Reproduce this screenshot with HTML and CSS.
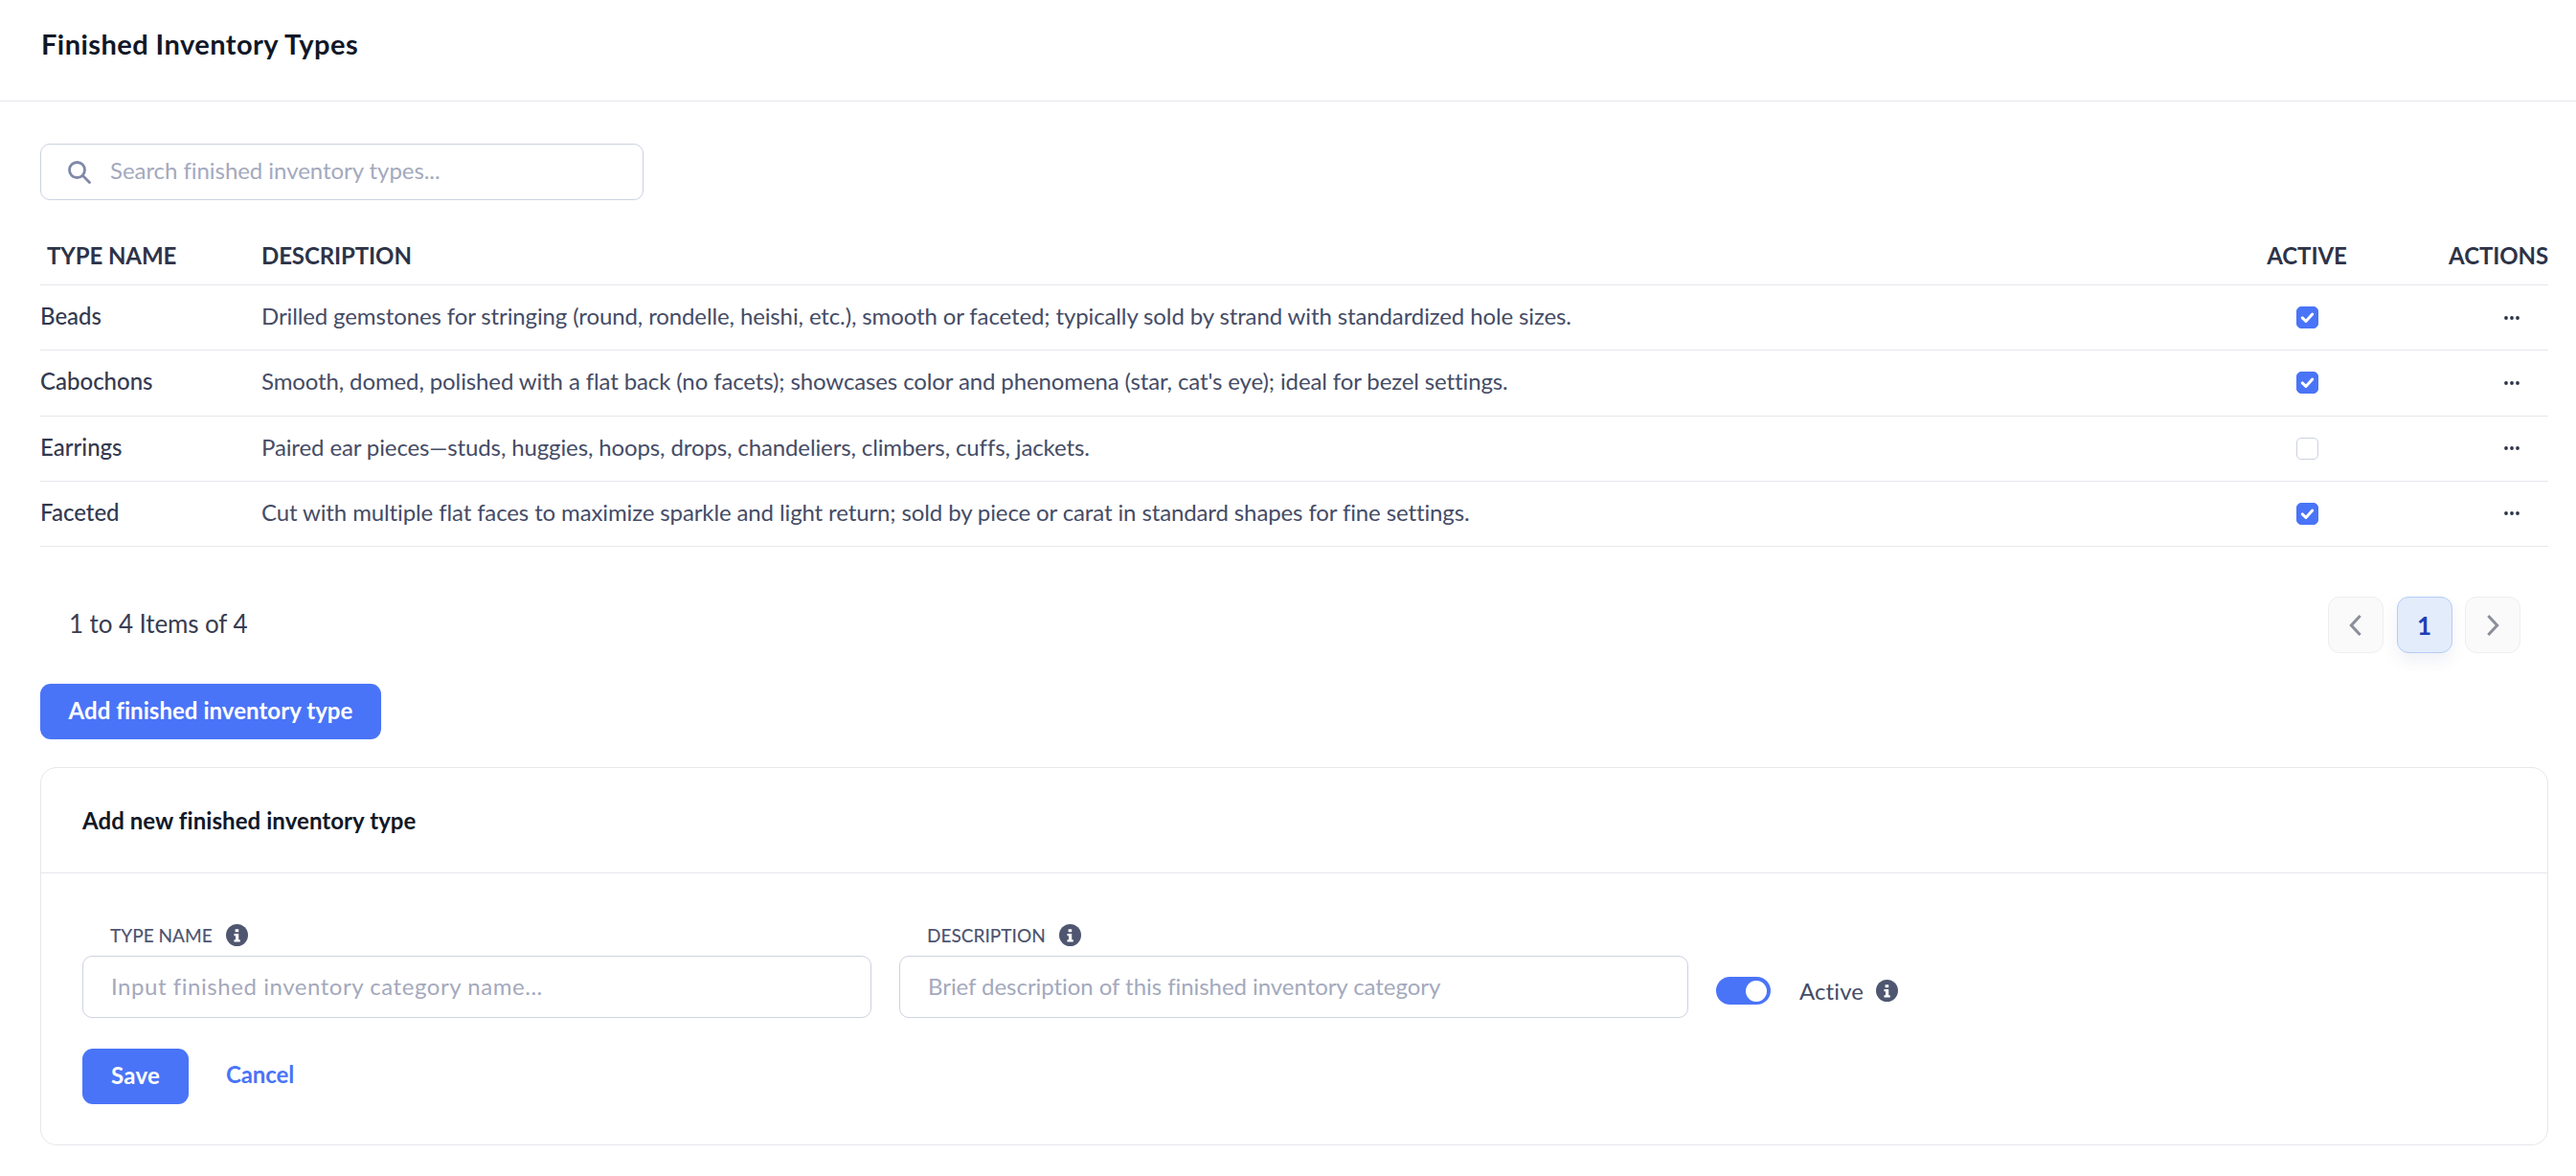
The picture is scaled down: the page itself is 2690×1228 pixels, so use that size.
FILE: index.html
```html
<!DOCTYPE html>
<html lang="en">
<head>
    <meta charset="UTF-8">
    <title>Finished Inventory Types</title>
    <link rel="stylesheet" href="styles.css">
</head>
<body>
    <header class="page-header">
        <h1 class="page-title">Finished Inventory Types</h1>
    </header>
    <main class="content">
        <label class="search">
            <svg class="search-icon" viewBox="0 0 24 24"><circle cx="9.5" cy="9.5" r="8"/><path d="M15.5 15.5l7 7"/></svg>
            <input class="search-input" type="text" placeholder="Search finished inventory types...">
        </label>

        <div class="table">
            <div class="table-row table-head">
                <div class="col-name">TYPE NAME</div>
                <div>DESCRIPTION</div>
                <div class="col-active">ACTIVE</div>
                <div class="col-actions">ACTIONS</div>
            </div>
            <div class="table-row">
                <div class="cell-name">Beads</div>
                <div class="cell-desc">Drilled gemstones for stringing (round, rondelle, heishi, etc.), smooth or faceted; typically sold by strand with standardized hole sizes.</div>
                <div class="col-active"><span class="checkbox is-checked"><svg viewBox="0 0 24 24"><path d="M6 12.5l4.2 4L18 8"/></svg></span></div>
                <div class="col-actions"><svg class="dots" viewBox="0 0 16 4"><circle cx="2" cy="2" r="1.9"/><circle cx="8" cy="2" r="1.9"/><circle cx="14" cy="2" r="1.9"/></svg></div>
            </div>
            <div class="table-row">
                <div class="cell-name">Cabochons</div>
                <div class="cell-desc">Smooth, domed, polished with a flat back (no facets); showcases color and phenomena (star, cat's eye); ideal for bezel settings.</div>
                <div class="col-active"><span class="checkbox is-checked"><svg viewBox="0 0 24 24"><path d="M6 12.5l4.2 4L18 8"/></svg></span></div>
                <div class="col-actions"><svg class="dots" viewBox="0 0 16 4"><circle cx="2" cy="2" r="1.9"/><circle cx="8" cy="2" r="1.9"/><circle cx="14" cy="2" r="1.9"/></svg></div>
            </div>
            <div class="table-row">
                <div class="cell-name">Earrings</div>
                <div class="cell-desc">Paired ear pieces—studs, huggies, hoops, drops, chandeliers, climbers, cuffs, jackets.</div>
                <div class="col-active"><span class="checkbox"></span></div>
                <div class="col-actions"><svg class="dots" viewBox="0 0 16 4"><circle cx="2" cy="2" r="1.9"/><circle cx="8" cy="2" r="1.9"/><circle cx="14" cy="2" r="1.9"/></svg></div>
            </div>
            <div class="table-row">
                <div class="cell-name">Faceted</div>
                <div class="cell-desc">Cut with multiple flat faces to maximize sparkle and light return; sold by piece or carat in standard shapes for fine settings.</div>
                <div class="col-active"><span class="checkbox is-checked"><svg viewBox="0 0 24 24"><path d="M6 12.5l4.2 4L18 8"/></svg></span></div>
                <div class="col-actions"><svg class="dots" viewBox="0 0 16 4"><circle cx="2" cy="2" r="1.9"/><circle cx="8" cy="2" r="1.9"/><circle cx="14" cy="2" r="1.9"/></svg></div>
            </div>
        </div>

        <div class="table-footer">
            <span class="items-count">1 to 4 Items of 4</span>
            <div class="pager">
                <button class="pager-btn"><svg viewBox="0 0 24 24"><path d="M16 3.5l-8 8.5 8 8.5"/></svg></button>
                <button class="pager-btn is-current">1</button>
                <button class="pager-btn"><svg viewBox="0 0 24 24"><path d="M8 3.5l8 8.5-8 8.5"/></svg></button>
            </div>
        </div>

        <button class="btn btn-add">Add finished inventory type</button>

        <section class="card">
            <h2 class="card-title">Add new finished inventory type</h2>
            <div class="card-body">
                <div class="form-row">
                    <div class="field">
                        <div class="field-label">TYPE NAME
                            <svg class="info" viewBox="0 0 24 24"><circle cx="12" cy="12" r="12"/><path d="M10 5.5h3.8v3.2H10zM8.8 10.5h5v6.5h1.6v2.4H8.8V17h1.6v-4.1H8.8z"/></svg>
                        </div>
                        <input class="text-input input-name" type="text" placeholder="Input finished inventory category name...">
                    </div>
                    <div class="field">
                        <div class="field-label">DESCRIPTION
                            <svg class="info" viewBox="0 0 24 24"><circle cx="12" cy="12" r="12"/><path d="M10 5.5h3.8v3.2H10zM8.8 10.5h5v6.5h1.6v2.4H8.8V17h1.6v-4.1H8.8z"/></svg>
                        </div>
                        <input class="text-input input-desc" type="text" placeholder="Brief description of this finished inventory category">
                    </div>
                    <div class="active-toggle">
                        <span class="toggle"><span class="toggle-knob"></span></span>
                        <span class="toggle-label">Active</span>
                        <svg class="info" viewBox="0 0 24 24"><circle cx="12" cy="12" r="12"/><path d="M10 5.5h3.8v3.2H10zM8.8 10.5h5v6.5h1.6v2.4H8.8V17h1.6v-4.1H8.8z"/></svg>
                    </div>
                </div>
                <div class="form-actions">
                    <button class="btn btn-save">Save</button>
                    <a class="link-cancel" href="#">Cancel</a>
                </div>
            </div>
        </section>
    </main>
</body>
</html>
```

FILE: styles.css
```css
* {
    margin: 0;
    padding: 0;
    box-sizing: border-box;
}
body {
    background-color: #fff;
    color: #454c66;
    font-family: "Lato", "Liberation Sans", sans-serif;
    font-size: 24px;
}
button, input {
    font-family: inherit;
}

.page-header {
    height: 106px;
    padding: 0 0 14px 43px;
    display: flex;
    align-items: center;
    border-bottom: 1px solid #e5e7eb;
}
.page-title {
    font-size: 29px;
    font-weight: 700;
    letter-spacing: 0.45px;
    color: #111827;
}

.content {
    padding: 44px 29px 0 42px;
}

.search {
    width: 630px;
    height: 59px;
    display: flex;
    align-items: center;
    border: 1px solid #cdd2e0;
    border-radius: 10px;
    padding-left: 28px;
}
.search-icon {
    width: 24px;
    height: 24px;
    flex: none;
    fill: none;
    stroke: #7f88a8;
    stroke-width: 2.8;
    stroke-linecap: round;
}
.search-input {
    flex: 1;
    margin-left: 20px;
    padding-bottom: 4px;
    border: none;
    outline: none;
    font-size: 24px;
    letter-spacing: -0.05px;
}
.search-input::placeholder, .text-input::placeholder {
    color: #a4a9bd;
    opacity: 1;
}

.table {
    margin-top: 27px;
}
.table-row {
    display: grid;
    grid-template-columns: 231px 1fr 138px 183px;
    align-items: center;
    height: 68.25px;
    border-bottom: 1px solid #e5e7eb;
}
.table-head {
    height: 62px;
    font-weight: 700;
    letter-spacing: -0.1px;
    color: #2d3348;
}
.col-name {
    padding-left: 7px;
}
.col-active {
    display: flex;
    justify-content: center;
}
.col-actions {
    display: flex;
    justify-content: flex-end;
}
.cell-name {
    padding-bottom: 4px;
    font-weight: 500;
    color: #333a50;
}
.cell-desc {
    padding-bottom: 4px;
    letter-spacing: -0.12px;
}
.table-row .dots {
    width: 16px;
    height: 4px;
    margin-right: 30px;
    fill: #2d3348;
}

.checkbox {
    width: 23px;
    height: 23px;
    display: block;
    border: 1px solid #cdd2e0;
    border-radius: 5px;
}
.checkbox.is-checked {
    background-color: #4a74f7;
    border-color: #4a74f7;
}
.checkbox svg {
    display: block;
    width: 21px;
    height: 21px;
    fill: none;
    stroke: #fff;
    stroke-width: 3.4;
    stroke-linecap: round;
    stroke-linejoin: round;
}

.table-footer {
    margin-top: 52px;
    padding: 0 29px 0 30px;
    display: flex;
    justify-content: space-between;
    align-items: center;
}
.items-count {
    padding-bottom: 3px;
    font-size: 26px;
    letter-spacing: -0.1px;
    color: #373d52;
}
.pager {
    display: flex;
    gap: 13.5px;
}
.pager-btn {
    width: 58px;
    height: 59px;
    display: flex;
    align-items: center;
    justify-content: center;
    background-color: #fafafa;
    border: 1px solid #eeeeef;
    border-radius: 12px;
}
.pager-btn svg {
    width: 28px;
    height: 28px;
    fill: none;
    stroke: #8c8f99;
    stroke-width: 2.6;
}
.pager-btn.is-current {
    background-color: #e2ecfb;
    border-color: #b5cdf6;
    color: #1d3fb8;
    font-size: 26px;
    font-weight: 700;
    box-shadow: 0 8px 16px rgba(60, 80, 140, 0.08);
}

.btn {
    display: block;
    height: 58px;
    padding-bottom: 4px;
    border: none;
    border-radius: 11px;
    background-color: #4a74f7;
    color: #fff;
    font-size: 24px;
    font-weight: 700;
}
.btn-add {
    width: 356px;
    margin-top: 32px;
    letter-spacing: 0.05px;
}
.btn-save {
    width: 111px;
    letter-spacing: 0.3px;
}

.card {
    margin-top: 29px;
    height: 395px;
    border: 1px solid #e5e7eb;
    border-radius: 17px;
}
.card-title {
    height: 110px;
    padding-left: 43px;
    display: flex;
    align-items: center;
    border-bottom: 1px solid #e5e7eb;
    font-size: 24px;
    font-weight: 700;
    letter-spacing: 0.07px;
    color: #111827;
}
.card-body {
    padding: 53px 43px 0;
}
.form-row {
    display: flex;
    gap: 29px;
    align-items: flex-end;
}
.field {
    width: 824px;
}
.field-label {
    display: flex;
    align-items: center;
    gap: 14px;
    height: 23px;
    padding-left: 29px;
    margin-bottom: 10px;
    font-size: 19px;
    font-weight: 500;
    color: #4f5670;
}
.info {
    width: 23px;
    height: 23px;
    flex: none;
    fill: #4f5670;
}
.info path {
    fill: #fff;
}
.text-input {
    display: block;
    width: 100%;
    height: 65px;
    border: 1px solid #cdd2e0;
    border-radius: 10px;
    padding: 0 29px 2px;
    font-size: 24px;
    outline: none;
}
.input-name {
    letter-spacing: 0.55px;
}
.input-desc {
    letter-spacing: -0.05px;
}

.active-toggle {
    display: flex;
    align-items: center;
    padding-bottom: 14px;
}
.toggle {
    width: 57px;
    height: 29px;
    display: flex;
    justify-content: flex-end;
    align-items: center;
    padding-right: 4px;
    background-color: #4a74f7;
    border-radius: 15px;
}
.toggle-knob {
    width: 22px;
    height: 22px;
    background-color: #fff;
    border-radius: 50%;
}
.toggle-label {
    margin: 0 13px 0 30px;
    letter-spacing: 0.1px;
}

.form-actions {
    margin-top: 32px;
    display: flex;
    align-items: center;
    gap: 39px;
}
.link-cancel {
    padding-bottom: 6px;
    letter-spacing: -0.1px;
    color: #4a74f7;
    font-weight: 700;
    text-decoration: none;
}
```
